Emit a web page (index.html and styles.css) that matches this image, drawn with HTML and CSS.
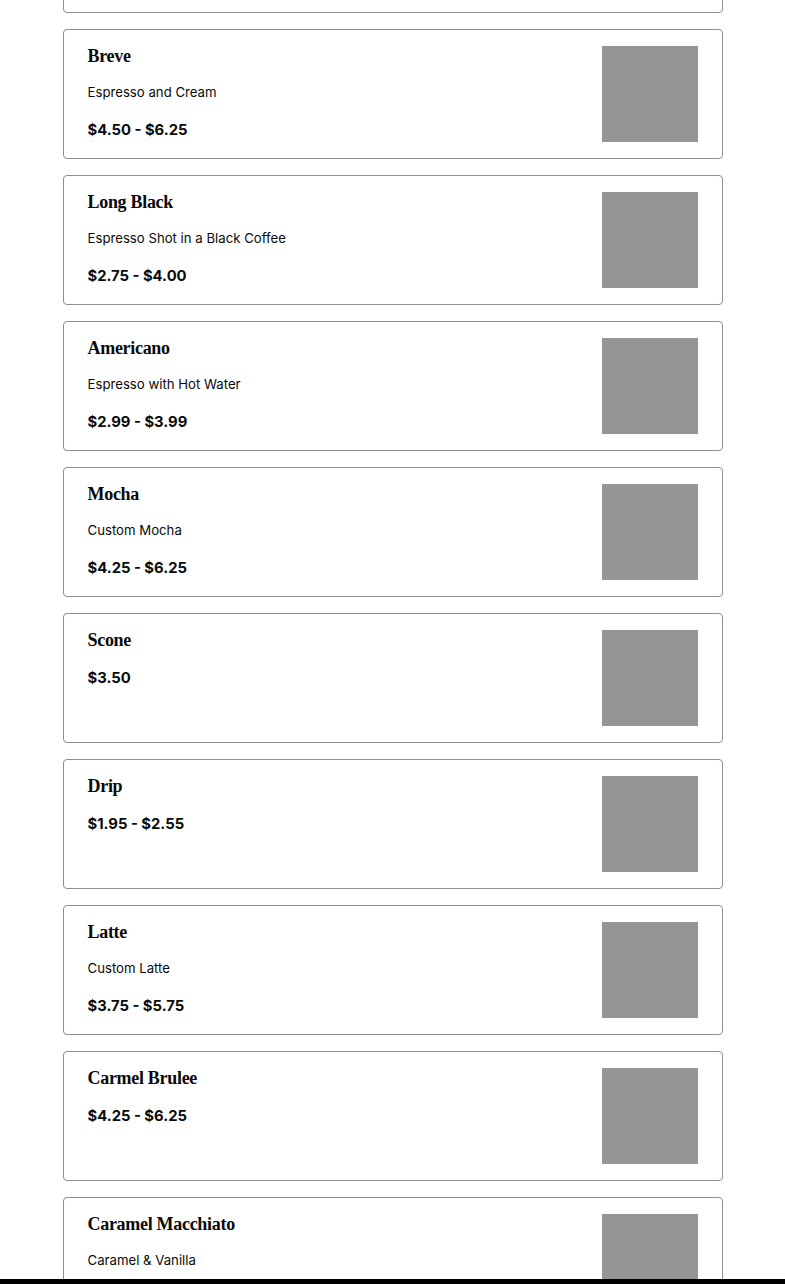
FILE: index.html
```html
<!DOCTYPE html>
<html lang="en">
<head>
<meta charset="UTF-8" />
<meta name="viewport" content="width=device-width, initial-scale=1" />
<title>Menu</title>
<link rel="stylesheet" href="styles.css">
</head>
<body>

<div class="menu">
  <div class="item">
    <div class="info">
      <h2>Cappuccino</h2>
      <p class="desc">Espresso with Steamed Milk</p>
      <p class="price">$3.75 - $5.75</p>
    </div>
    <div class="thumb"></div>
  </div>

  <div class="item">
    <div class="info">
      <h2>Breve</h2>
      <p class="desc">Espresso and Cream</p>
      <p class="price">$4.50 - $6.25</p>
    </div>
    <div class="thumb"></div>
  </div>

  <div class="item">
    <div class="info">
      <h2>Long Black</h2>
      <p class="desc">Espresso Shot in a Black Coffee</p>
      <p class="price">$2.75 - $4.00</p>
    </div>
    <div class="thumb"></div>
  </div>

  <div class="item">
    <div class="info">
      <h2>Americano</h2>
      <p class="desc">Espresso with Hot Water</p>
      <p class="price">$2.99 - $3.99</p>
    </div>
    <div class="thumb"></div>
  </div>

  <div class="item">
    <div class="info">
      <h2>Mocha</h2>
      <p class="desc">Custom Mocha</p>
      <p class="price">$4.25 - $6.25</p>
    </div>
    <div class="thumb"></div>
  </div>

  <div class="item">
    <div class="info">
      <h2>Scone</h2>
      <p class="price">$3.50</p>
    </div>
    <div class="thumb"></div>
  </div>

  <div class="item">
    <div class="info">
      <h2>Drip</h2>
      <p class="price">$1.95 - $2.55</p>
    </div>
    <div class="thumb"></div>
  </div>

  <div class="item">
    <div class="info">
      <h2>Latte</h2>
      <p class="desc">Custom Latte</p>
      <p class="price">$3.75 - $5.75</p>
    </div>
    <div class="thumb"></div>
  </div>

  <div class="item">
    <div class="info">
      <h2>Carmel Brulee</h2>
      <p class="price">$4.25 - $6.25</p>
    </div>
    <div class="thumb"></div>
  </div>

  <div class="item">
    <div class="info">
      <h2>Caramel Macchiato</h2>
      <p class="desc">Caramel &amp; Vanilla</p>
      <p class="price">$4.25 - $6.25</p>
    </div>
    <div class="thumb"></div>
  </div>
</div>

<div class="bottom-bar"></div>

</body>
</html>
```

FILE: styles.css
```css
body {
  margin: 0;
  background: #fff;
  color: #0a0a0a;
  font-family: Inter, 'Liberation Sans', Arial, sans-serif;
  overflow: hidden;
}

.menu {
  width: 660px;
  margin: -117px auto 0;
  display: flex;
  flex-direction: column;
  gap: 16px;
}

.item {
  display: flex;
  justify-content: space-between;
  border: 1px solid #8f8f8f;
  border-radius: 4px;
  padding: 16px 24px;
}

.info h2 {
  margin: 0 0 16px;
  font-family: 'Liberation Serif', 'Times New Roman', serif;
  font-weight: 700;
  font-size: 18px;
  line-height: 20px;
  letter-spacing: -0.3px;
}

.info p {
  margin: 0;
  line-height: 20px;
}

.desc {
  font-size: 13.2px;
  margin-bottom: 16px !important;
}

.price {
  font-weight: 700;
  font-size: 14.8px;
  padding-top: 2px;
}

.thumb {
  width: 96px;
  height: 96px;
  background: #959595;
  flex-shrink: 0;
}

.bottom-bar {
  position: fixed;
  left: 0;
  right: 0;
  bottom: 0;
  height: 5px;
  background: #000;
}
```
